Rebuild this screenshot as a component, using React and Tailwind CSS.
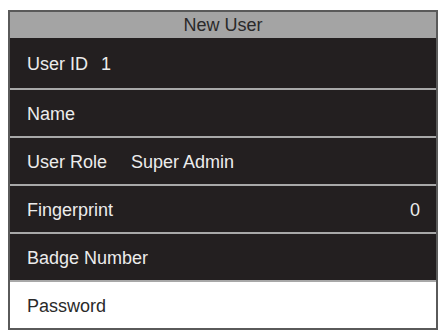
export default function App() {
  const rowText = "text-[18px] text-[#ececec]";

  return (
    <div
      className="w-[442px] h-[334px] bg-white pt-[10px] pl-[8px]"
      style={{ fontFamily: '"Liberation Sans", Arial, sans-serif' }}
    >
      <div className="w-[430px] border-2 border-[#5a5a5a] bg-[#231f20]">
        {/* title bar */}
        <div className="h-[26px] bg-[#a4a4a4] flex items-center justify-center text-[18px] text-[#2a2a2a] leading-none">
          New User
        </div>

        <div className={`h-[50px] flex items-center pl-[17px] pt-[3px] ${rowText}`}>
          <span>User ID</span>
          <span className="ml-[13px]">1</span>
        </div>

        <div className={`h-[48px] border-t-2 border-[#a8a8a8] flex items-center pl-[17px] pt-[2px] ${rowText}`}>
          Name
        </div>

        <div className={`h-[48px] border-t-2 border-[#a8a8a8] flex items-center pl-[17px] pt-[2px] ${rowText}`}>
          <span>User Role</span>
          <span className="ml-[24px]">Super Admin</span>
        </div>

        <div className={`h-[48px] border-t-2 border-[#a8a8a8] flex items-center justify-between pl-[17px] pr-[16px] pt-[2px] ${rowText}`}>
          <span>Fingerprint</span>
          <span>0</span>
        </div>

        <div className={`h-[48px] border-t-2 border-[#a8a8a8] flex items-center pl-[17px] pt-[2px] ${rowText}`}>
          Badge Number
        </div>

        <div className="h-[48px] border-t-2 border-[#a8a8a8] bg-white flex items-center pl-[17px] pt-[2px] text-[18px] text-[#2a2a2a]">
          Password
        </div>
      </div>
    </div>
  );
}
